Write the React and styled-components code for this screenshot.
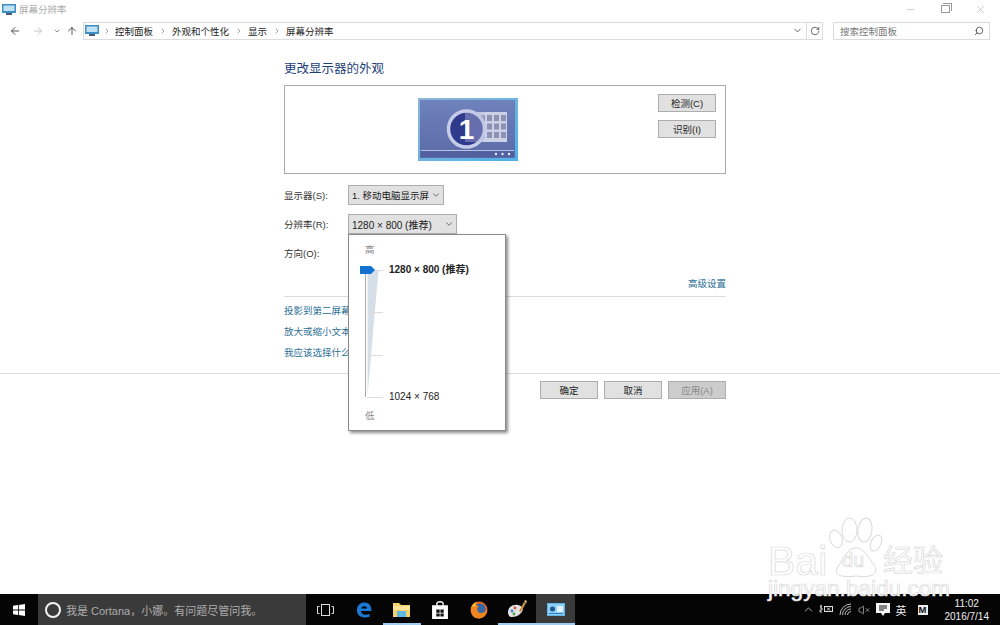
import React from 'react'
import styled, { createGlobalStyle } from 'styled-components'
import { ArrowLeft, ArrowRight, ArrowUp, ChevronDown, ChevronRight, RotateCw, Search, Minus, X, ChevronUp, VolumeX } from 'lucide-react'

const Global = createGlobalStyle`
  html, body { margin: 0; padding: 0; background: #fff; overflow: hidden; }
`

const Page = styled.div`
  width: 1000px;
  height: 625px;
  display: flex;
  flex-direction: column;
  position: relative;
  overflow: hidden;
  background: #fff;
  color: #333;
  font-size: 10px;
  font-family: "Liberation Sans", "Noto Sans CJK SC", sans-serif;
`
const TitleBar = styled.div`
  height: 18px;
  display: flex;
  align-items: center;
  padding-left: 2px;
  gap: 3px;
  color: #aaa;
  font-size: 9.5px;
`
const Controls = styled.div`
  margin-left: auto;
  display: flex;
  align-items: center;
  color: #999;
  padding-right: 2px;
  height: 100%;
`
const Ctl = styled.div`
  width: 35px;
  display: flex;
  justify-content: center;
`
const Restore = styled.div`
  width: 7px;
  height: 6px;
  border: 1px solid #999;
  box-shadow: 1px -1px 0 0 #fff, 2px -2px 0 0 #999;
`
const NavBar = styled.div`
  height: 19px;
  margin-top: 3px;
  display: flex;
  align-items: center;
  padding-left: 6px;
`
const NavBtn = styled.div`
  width: ${p => p.$w || 18}px;
  display: flex;
  justify-content: center;
  color: ${p => p.$off ? '#c4c4c4' : '#555'};
`
const Crumbs = styled.div`
  width: 740px;
  height: 18px;
  box-sizing: border-box;
  margin-left: 1px;
  border: 1px solid #dcdcdc;
  display: flex;
  align-items: center;
  padding-left: 1px;
  color: #222;
  font-size: 9.5px;
`
const CrumbSep = styled.span`
  width: ${p => p.$w || 19}px;
  display: flex;
  justify-content: center;
  color: #777;
`
const CrumbEnd = styled.div`
  margin-left: auto;
  height: 100%;
  display: flex;
  align-items: center;
`
const Refresh = styled.div`
  width: 15px;
  height: 100%;
  margin-left: 3px;
  border-left: 1px solid #dcdcdc;
  display: flex;
  align-items: center;
  justify-content: center;
  color: #555;
`
const SearchBox = styled.div`
  width: 157px;
  height: 18px;
  margin-left: 10px;
  border: 1px solid #dcdcdc;
  display: flex;
  align-items: center;
  justify-content: space-between;
  padding: 0 5px 0 6px;
  box-sizing: border-box;
  color: #777;
  font-size: 9.5px;
`
const MirrorSearch = styled(Search)`
  transform: scaleX(-1);
`
const Main = styled.div`
  flex: 1;
  display: flex;
  flex-direction: column;
  min-height: 0;
`
const Content = styled.div`
  width: 442px;
  margin-left: 284px;
  padding-top: 21px;
  height: 333px;
  box-sizing: border-box;
  display: flex;
  flex-direction: column;
`
const Title = styled.div`
  font-size: 12.5px;
  line-height: 16px;
  color: #1d3f78;
`
const Preview = styled.div`
  height: 87px;
  margin-top: 8px;
  border: 1px solid #a9a9a9;
  display: flex;
`
const MonitorWrap = styled.div`
  margin: 12px 0 0 133px;
  height: 63px;
`
const SideBtns = styled.div`
  margin: 8px 0 0 auto;
  padding-right: 9px;
  display: flex;
  flex-direction: column;
  gap: 8px;
`
const Btn = styled.div`
  width: ${p => p.$w || 56}px;
  height: 16px;
  border: 1px solid #adadad;
  background: ${p => p.$off ? '#cccccc' : '#e1e1e1'};
  color: ${p => p.$off ? '#8a8a8a' : '#222'};
  display: flex;
  align-items: center;
  justify-content: center;
  font-size: 9.5px;
`
const Row = styled.div`
  display: flex;
  align-items: center;
  height: 20px;
  margin-top: ${p => p.$mt || 0}px;
`
const Label = styled.div`
  width: 64px;
  color: #333;
  font-size: 9.5px;
`
const Select = styled.div`
  width: ${p => p.$w}px;
  height: 20px;
  box-sizing: border-box;
  border: 1px solid #adadad;
  background: #e1e1e1;
  color: #222;
  padding: 0 2px 0 3px;
  display: flex;
  align-items: center;
  justify-content: space-between;
  font-size: ${p => p.$fs || 9.5}px;
`
const Advanced = styled.div`
  margin-top: 14px;
  text-align: right;
  color: #2b6f96;
  font-size: 9.5px;
  line-height: 14px;
  padding-bottom: 5px;
  border-bottom: 1px solid #dcdcdc;
`
const Links = styled.div`
  display: flex;
  flex-direction: column;
  gap: 7px;
  margin-top: 7px;
`
const Link = styled.div`
  color: #2b6f96;
  font-size: 9.5px;
  line-height: 14px;
`
const Footer = styled.div`
  border-top: 1px solid #dcdcdc;
  display: flex;
  justify-content: flex-end;
  gap: 6px;
  width: 100%;
  padding: 7px 274px 0 0;
  box-sizing: border-box;
`
const Popup = styled.div`
  position: absolute;
  left: 348px;
  top: 234px;
  width: 158px;
  height: 197px;
  box-sizing: border-box;
  background: #fff;
  border: 1px solid #8a8a8a;
  box-shadow: 2px 2px 3px rgba(0,0,0,.45);
  display: flex;
  flex-direction: column;
  padding: 8px 0 0 16px;
`
const Level = styled.div`
  color: #888;
  font-size: 9.5px;
  line-height: 14px;
`
const Slider = styled.div`
  height: 139px;
  margin: 8px 0 5px -6px;
  display: flex;
`
const SliderArt = styled.svg`
  width: 30px;
  height: 139px;
  flex: none;
`
const Options = styled.div`
  margin-top: -2px;
  display: flex;
  flex-direction: column;
  justify-content: space-between;
  color: #222;
  font-size: 10px;
  line-height: 14px;
  height: 141px;
`
const Option = styled.div`
  font-weight: ${p => p.$sel ? 700 : 400};
`
const Taskbar = styled.div`
  height: 31px;
  flex: none;
  background: #050505;
  display: flex;
  align-items: stretch;
  color: #fff;
`
const StartBtn = styled.div`
  width: 38px;
  display: flex;
  align-items: center;
  justify-content: center;
`
const Cortana = styled.div`
  width: 268px;
  background: #3a3a3a;
  display: flex;
  align-items: center;
  padding-left: 7px;
  box-sizing: border-box;
  color: #adadad;
  font-size: 11px;
  gap: 5px;
`
const Ring = styled.div`
  width: 12px;
  height: 12px;
  border: 2px solid #f2f2f2;
  border-radius: 50%;
`
const TaskIcon = styled.div`
  width: 38.4px;
  display: flex;
  align-items: center;
  justify-content: center;
  background: ${p => p.$active ? '#3a3a3a' : 'transparent'};
  border-bottom: 2px solid ${p => p.$bar ? '#9fcdf0' : 'transparent'};
  border-top: 2px solid transparent;
  box-sizing: border-box;
`
const Tray = styled.div`
  margin-left: auto;
  display: flex;
  align-items: center;
  gap: 6px;
  padding-right: 11px;
  color: #ddd;
`
const TrayChevron = styled(ChevronUp)`
  margin-right: -2px;
  color: #fff;
`
const TrayText = styled.span`
  font-size: 11px;
  color: #eee;
`
const MBox = styled.span`
  width: 10px;
  height: 10px;
  background: #eee;
  color: #111;
  font-size: 9.5px;
  font-weight: 700;
  display: flex;
  align-items: center;
  justify-content: center;
  margin-left: 5px;
`
const Clock = styled.div`
  margin-left: 11px;
  text-align: center;
  font-size: 10px;
  line-height: 13px;
  color: #eee;
`
const Watermark = styled.div`
  position: absolute;
  left: 766px;
  top: 515px;
  width: 200px;
  height: 90px;
  pointer-events: none;
`
const WmText = styled.span`
  position: absolute;
  left: ${p => p.$x}px;
  top: ${p => p.$y}px;
  color: #fff;
  -webkit-text-stroke: .7px #d9d9d9;
  font-size: ${p => p.$size}px;
  line-height: ${p => p.$lh}px;
  white-space: nowrap;
`
const PawArt = styled.svg`
  position: absolute;
  left: 60px;
  top: 0;
`

const MonitorIcon = () => (
  <svg width="14" height="11" viewBox="0 0 14 11">
    <rect x="0" y="0" width="14" height="9" fill="#3d8ec4" />
    <rect x="1.5" y="1.5" width="11" height="5.5" fill="#bfe3f5" />
    <rect x="4" y="9" width="6" height="2" fill="#4a5a7a" />
  </svg>
)

const Display = () => (
  <svg width="100" height="63" viewBox="0 0 100 63">
    <defs>
      <linearGradient id="scr" x1="0" y1="0" x2="0" y2="1">
        <stop offset="0" stopColor="#6f82bb" />
        <stop offset="1" stopColor="#5a6aa8" />
      </linearGradient>
      <linearGradient id="frame" x1="0" y1="0" x2="1" y2="1">
        <stop offset="0" stopColor="#8fb4d8" />
        <stop offset="1" stopColor="#4fb2e8" />
      </linearGradient>
    </defs>
    <rect width="100" height="63" fill="url(#frame)" />
    <rect x="2" y="2" width="95" height="58" fill="url(#scr)" />
    <rect x="3" y="52" width="93" height="1" fill="#b9c3e2" />
    <rect x="3" y="53" width="93" height="6" fill="#52609f" />
    <circle cx="78" cy="56" r="1.2" fill="#e8ecf8" />
    <circle cx="84.5" cy="56" r="1.2" fill="#e8ecf8" />
    <circle cx="91" cy="56" r="1.2" fill="#e8ecf8" />
    <rect x="47" y="14" width="42" height="30" fill="#cdd1e6" />
    {[0, 1, 2].flatMap(r => [0, 1, 2, 3].map(c => (
      <rect key={`${r}-${c}`} x={62 + c * 7} y={17 + r * 8.5} width="5" height="6" fill="#8c92b3" />
    )))}
    <circle cx="48.5" cy="31" r="18" fill="#2f3a8c" stroke="#c6cbe8" strokeWidth="3.5" />
    <rect x="47" y="14" width="19" height="30" fill="#b9bde0" opacity=".4" />
    <text x="48.5" y="41" textAnchor="middle" fontSize="28" fontWeight="700" fontFamily="Liberation Sans" fill="#fff">1</text>
  </svg>
)

const SliderDrawing = () => (
  <SliderArt viewBox="0 0 30 139">
    <path d="M8.5 5 L19.5 5 L8.5 131 Z" fill="#d5dfe8" />
    <rect x="6" y="5" width="1" height="127" fill="#a8a8a8" />
    <path d="M1 1 H12 L16 5 L12 9 H1 Z" fill="#1173cf" />
    <path d="M16 5.5 H24 M9 47.5 H24 M9 90.5 H24 M8 132.5 H24" stroke="#dcdcdc" />
  </SliderArt>
)

const WinLogo = () => (
  <svg width="12" height="12" viewBox="0 0 12 12" fill="#fff">
    <path d="M0 1.7 L5 1 V5.6 H0 Z M5.8 .9 L12 0 V5.6 H5.8 Z M0 6.4 H5 V11 L0 10.3 Z M5.8 6.4 H12 V12 L5.8 11.1 Z" />
  </svg>
)

const TaskView = () => (
  <svg width="17" height="12" viewBox="0 0 17 12" fill="none" stroke="#ddd">
    <rect x="4.5" y=".5" width="8" height="11" />
    <path d="M2.5 2.5 H.5 V9.5 H2.5 M14.5 2.5 H16.5 V9.5 H14.5" />
  </svg>
)

const EdgeIcon = () => (
  <svg width="16" height="16" viewBox="0 0 16 16">
    <path d="M1 8 C1 3 4.5 .5 8.5 .5 C13 .5 15.5 3.5 15.5 9 H5 C5 12 8 14 13.5 12 V14.8 C7.5 17 .8 14.5 1 8 Z M5.2 6.5 H11 C11 3.5 6 3.3 5.2 6.5 Z" fill="#1b79d6" fillRule="evenodd" />
  </svg>
)

const FolderIcon = () => (
  <svg width="17" height="15" viewBox="0 0 17 15">
    <path d="M0 1 H6 L8 3 H17 V15 H0 Z" fill="#f5cf6a" />
    <rect x="0" y="4" width="17" height="4" fill="#fbe49a" />
    <rect x="4" y="9" width="9" height="6" fill="#5cb8e0" />
  </svg>
)

const StoreIcon = () => (
  <svg width="16" height="18" viewBox="0 0 15 17">
    <path d="M4.5 5 V2.5 Q4.5 .7 7.5 .7 Q10.5 .7 10.5 2.5 V5" fill="none" stroke="#fff" strokeWidth="1.2" />
    <path d="M0 4 H15 V17 H0 Z" fill="#fff" />
    <path d="M4 8 H7.2 V11 H4 Z M7.9 8 H11 V11 H7.9 Z M4 11.7 H7.2 V14.6 H4 Z M7.9 11.7 H11 V14.6 H7.9 Z" fill="#111" />
  </svg>
)

const FoxIcon = () => (
  <svg width="18" height="18" viewBox="0 0 18 18">
    <circle cx="9" cy="9" r="8.5" fill="#e8641f" />
    <circle cx="10" cy="8" r="5.5" fill="#3566a8" />
    <path d="M1 9 C1 3 5 1 8 1 C5 3 6 5 9 5 C6 7 7 12 11 12 C14 12 16 10 17 8 C17 14 13 17.5 9 17.5 C4 17.5 1 14 1 9 Z" fill="#f0861f" />
    <path d="M2 6 C3 3 5 2 6 1 C5 3 5 4 6 5 Z" fill="#f9c33a" />
  </svg>
)

const PaintIcon = () => (
  <svg width="20" height="19" viewBox="0 0 20 19">
    <path d="M1 12 C1 7 6 4 11 5 C16 6 17 10 14 13 C11 16 8 17 5 17 C2 17 1 15 1 12 Z" fill="#e4e4e4" />
    <circle cx="5" cy="11" r="1.4" fill="#3a7bd5" />
    <circle cx="8" cy="8" r="1.4" fill="#d94a3d" />
    <circle cx="7" cy="14" r="1.4" fill="#4aa04a" />
    <path d="M12 11 L17 2 L19 3 L14 12 Z" fill="#c9963e" />
    <path d="M17 1 L19 0 L20 2 L19 3 Z" fill="#e7c27a" />
  </svg>
)

const ScreenIcon = () => (
  <svg width="18" height="14" viewBox="0 0 18 14">
    <rect x="0" y="0" width="18" height="13" fill="#5fb4e8" />
    <rect x="1" y="1" width="16" height="11" fill="#8cd0f5" />
    <circle cx="5.5" cy="6" r="2.5" fill="#20568f" />
    <rect x="10" y="3" width="6" height="6" fill="#e2f1fb" />
    <rect x="2" y="10" width="14" height="1" fill="#2f7fbf" />
  </svg>
)

const BatteryIcon = () => (
  <svg width="14" height="11" viewBox="0 0 14 11" fill="none" stroke="#ddd">
    <path d="M1 2 H3 M2 1 V4 M1 4 H3 V6 H1 V8 H3" />
    <rect x="5.5" y="2.5" width="8" height="5" />
    <path d="M8 3.5 L11 6.5 M11 3.5 L8 6.5" />
  </svg>
)

const WifiFan = () => (
  <svg width="13" height="13" viewBox="0 0 13 13" fill="none" stroke="#bbb" strokeWidth="1">
    <path d="M1 12 A11 11 0 0 1 12 1" />
    <path d="M3.5 12 A8.5 8.5 0 0 1 12 3.5" />
    <path d="M6 12 A6 6 0 0 1 12 6" />
    <path d="M8.5 12 A3.5 3.5 0 0 1 12 8.5" />
  </svg>
)

const ChatIcon = () => (
  <svg width="14" height="14" viewBox="0 0 14 14">
    <path d="M0 0 H14 V10 H9 L7 13 L5 10 H0 Z" fill="#f5f5f5" />
    <path d="M3 3 H11 M3 5 H11 M3 7 H8" stroke="#111" />
  </svg>
)

const Paw = () => (
  <PawArt width="60" height="65" viewBox="0 0 60 65" fill="#fff" stroke="#d9d9d9" strokeWidth="1">
    <ellipse cx="10" cy="24" rx="6" ry="9" transform="rotate(-20 10 24)" />
    <ellipse cx="23.5" cy="15" rx="7.5" ry="12" />
    <ellipse cx="39" cy="15" rx="7" ry="12" transform="rotate(8 39 15)" />
    <ellipse cx="50" cy="28" rx="5" ry="8.5" transform="rotate(25 50 28)" />
    <path d="M12 52 C6 60 16 63 30 61 C44 63 54 60 48 50 C42 42 38 33 30 33 C22 33 18 42 12 52 Z" />
  </PawArt>
)

const App = () => {
  return (
    <Page>
      <Global />
      <TitleBar>
        <MonitorIcon />
        <span>屏幕分辨率</span>
        <Controls>
          <Ctl><Minus size={11} strokeWidth={1} /></Ctl>
          <Ctl><Restore /></Ctl>
          <Ctl><X size={13} strokeWidth={.8} /></Ctl>
        </Controls>
      </TitleBar>
      <NavBar>
        <NavBtn><ArrowLeft size={12} /></NavBtn>
        <NavBtn $w={28} $off><ArrowRight size={12} /></NavBtn>
        <NavBtn $w={10}><ChevronDown size={8} /></NavBtn>
        <NavBtn $w={20}><ArrowUp size={12} /></NavBtn>
        <Crumbs>
          <MonitorIcon />
          <CrumbSep $w={16}><ChevronRight size={8} /></CrumbSep>
          <span>控制面板</span>
          <CrumbSep><ChevronRight size={8} /></CrumbSep>
          <span>外观和个性化</span>
          <CrumbSep><ChevronRight size={8} /></CrumbSep>
          <span>显示</span>
          <CrumbSep><ChevronRight size={8} /></CrumbSep>
          <span>屏幕分辨率</span>
          <CrumbEnd>
            <ChevronDown size={11} color="#555" />
            <Refresh><RotateCw size={10} /></Refresh>
          </CrumbEnd>
        </Crumbs>
        <SearchBox>
          <span>搜索控制面板</span>
          <MirrorSearch size={10} color="#444" />
        </SearchBox>
      </NavBar>
      <Main>
        <Content>
          <Title>更改显示器的外观</Title>
          <Preview>
            <MonitorWrap><Display /></MonitorWrap>
            <SideBtns>
              <Btn>检测(C)</Btn>
              <Btn>识别(I)</Btn>
            </SideBtns>
          </Preview>
          <Row $mt={11}>
            <Label>显示器(S):</Label>
            <Select $w={96}>1. 移动电脑显示屏<ChevronDown size={10} color="#555" /></Select>
          </Row>
          <Row $mt={9}>
            <Label>分辨率(R):</Label>
            <Select $w={109} $fs={10}>1280 × 800 (推荐)<ChevronDown size={10} color="#555" /></Select>
          </Row>
          <Row $mt={9}>
            <Label>方向(O):</Label>
          </Row>
          <Advanced>高级设置</Advanced>
          <Links>
            <Link>投影到第二屏幕</Link>
            <Link>放大或缩小文本和其他项目</Link>
            <Link>我应该选择什么显示器设置?</Link>
          </Links>
        </Content>
        <Footer>
          <Btn>确定</Btn>
          <Btn>取消</Btn>
          <Btn $off>应用(A)</Btn>
        </Footer>
      </Main>
      <Taskbar>
        <StartBtn><WinLogo /></StartBtn>
        <Cortana><Ring /><span>我是 Cortana，小娜。有问题尽管问我。</span></Cortana>
        <TaskIcon><TaskView /></TaskIcon>
        <TaskIcon><EdgeIcon /></TaskIcon>
        <TaskIcon $bar><FolderIcon /></TaskIcon>
        <TaskIcon><StoreIcon /></TaskIcon>
        <TaskIcon><FoxIcon /></TaskIcon>
        <TaskIcon $bar><PaintIcon /></TaskIcon>
        <TaskIcon $active $bar><ScreenIcon /></TaskIcon>
        <Tray>
          <TrayChevron size={13} strokeWidth={1.2} />
          <BatteryIcon />
          <WifiFan />
          <VolumeX size={12} strokeWidth={1.2} />
          <ChatIcon />
          <TrayText>英</TrayText>
          <MBox>M</MBox>
          <Clock>11:02<br />2016/7/14</Clock>
        </Tray>
      </Taskbar>
      <Popup>
        <Level>高</Level>
        <Slider>
          <SliderDrawing />
          <Options>
            <Option $sel>1280 × 800 (推荐)</Option>
            <Option>1024 × 768</Option>
          </Options>
        </Slider>
        <Level>低</Level>
      </Popup>
      <Watermark>
        <Paw />
        <WmText $x={2} $y={29} $size={41} $lh={34}>Bai</WmText>
        <WmText $x={76} $y={33} $size={20} $lh={24}>du</WmText>
        <WmText $x={117} $y={31} $size={30} $lh={30}>经验</WmText>
        <WmText $x={2} $y={66} $size={22.6} $lh={16}>jingyan.baidu.com</WmText>
      </Watermark>
    </Page>
  )
}

export default App
